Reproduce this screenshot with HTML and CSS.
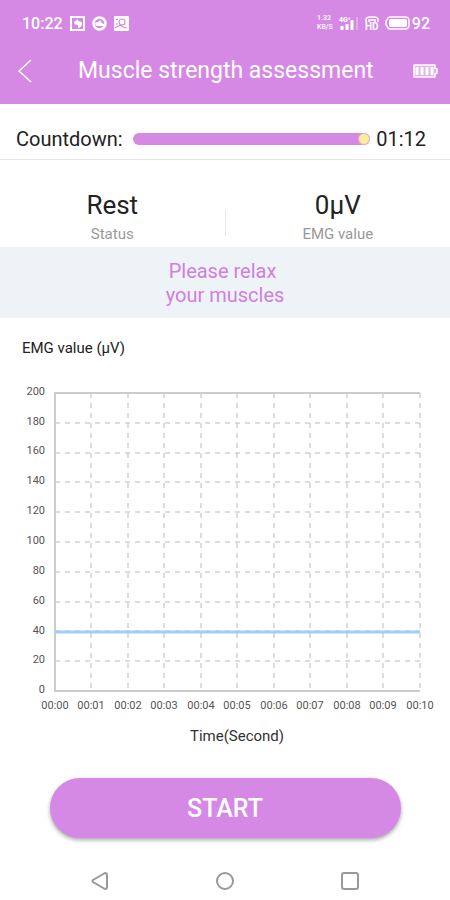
FILE: index.html
```
<!DOCTYPE html>
<html lang='en'>
    <head>
        <meta charset='utf-8'>
        <title>Muscle strength assessment</title>
        <meta name='viewport' content='width=device-width, initial-scale=1.0' />
        <link rel="stylesheet" href="styles.css">
    </head>
    <body>
        <header>
            <div class='statusBar'>
                <span>10:22</span>
                <svg class='statusIcon' width='15' height='15' viewBox='0 0 15 15'>
                    <rect x='1' y='1' width='13' height='13' fill='none' stroke='#fff' stroke-width='2' />
                    <path d='M4 6l4-3v2q4 0 4 3-1 4-4 4V9Q4 9 4 6z' fill='#fff' />
                </svg>
                <svg class='statusIcon' width='15' height='15' viewBox='0 0 15 15'>
                    <circle cx='7.5' cy='7.5' r='6' fill='none' stroke='#fff' stroke-width='2.5' />
                    <path d='M3 7q3 0 5-3 1 3 4 4v2H4z' fill='#fff' />
                </svg>
                <svg class='statusIcon' width='15' height='15' viewBox='0 0 15 15'>
                    <rect width='15' height='15' rx='1' fill='#fff' />
                    <circle cx='8' cy='6' r='3' fill='none' stroke='#d688e5' stroke-width='1.2' />
                    <path d='M2 4l2-1M1 12l5-3 3 2 4 1M2 8h2' fill='none' stroke='#d688e5' stroke-width='1.2' />
                </svg>
                <span class='push speed'><span>1.32</span><span>KB/S</span></span>
                <svg width='19' height='14' viewBox='0 0 19 14'>
                    <text x='0' y='6' class='tiny'>4G⁺</text>
                    <path d='M3 14v-4M8 14V8M13 14V4' stroke='#fff' stroke-width='3' />
                    <path d='M18 14V1' stroke='#fff' stroke-width='2' opacity='0.3' />
                </svg>
                <svg class='hd' width='16' height='16' viewBox='0 0 16 16'>
                    <path d='M2 7V5q0-3 4-3h4q4 0 4 3v2M5 7V5h6v2' fill='none' stroke='#fff' stroke-width='1.5' />
                    <text x='1' y='15' class='hdText'>HD</text>
                </svg>
                <svg width='25' height='14' viewBox='0 0 25 14'>
                    <path d='M5 1h15q4 0 4 4v4q0 4-4 4H5q-2 0-3-3L1 9V5l1-1q1-3 3-3z' fill='none' stroke='#fff' stroke-width='1.5' />
                    <rect x='4' y='3' width='18' height='8' rx='2' fill='#fff' />
                </svg>
                <span class='percent'>92</span>
            </div>
            <div class='titleBar'>
                <button type='button' class='iconButton' aria-label='Back'>
                    <svg width='16' height='26' viewBox='0 0 16 26'>
                        <path d='M13 2L1 13l12 11' fill='none' stroke='#fff' stroke-width='1.5' />
                    </svg>
                </button>
                <h1>Muscle strength assessment</h1>
                <svg class='push' width='25' height='14' viewBox='0 0 25 14'>
                    <path d='M1 1h21v3l2 1v4l-2 1v3H1z' fill='#fff' fill-opacity='0.35' stroke='#fff' stroke-width='1.5' stroke-linejoin='round' />
                    <path d='M4 3v8M9 3v8M14 3v8M19 3v8' stroke='#fff' stroke-width='3' />
                </svg>
            </div>
        </header>
        <div class='countdown'>
            <span id='countdownLabel'>Countdown:</span>
            <div class='bar' role='progressbar' aria-labelledby='countdownLabel' aria-valuenow='100'>
                <span class='knob'></span>
            </div>
            <span>01:12</span>
        </div>
        <div class='readouts'>
            <div class='readout'>
                <div class='value'>Rest</div>
                <div class='name'>Status</div>
            </div>
            <div class='divider'></div>
            <div class='readout'>
                <div class='value'>0µV</div>
                <div class='name'>EMG value</div>
            </div>
        </div>
        <p class='message'>Please relax 
your muscles</p>
        <h2>EMG value (µV)</h2>
        <svg class='chart' viewBox='0 0 450 380'>
            <g class='grid'>
                <path d='M55 53H420M55 83H420M55 112H420M55 142H420M55 172H420M55 202H420M55 232H420M55 261H420M55 291H420' />
                <path d='M91 23V321M128 23V321M164 23V321M201 23V321M237 23V321M274 23V321M310 23V321M347 23V321M383 23V321M420 23V321' />
            </g>
            <path class='frame' d='M420 23H55V321H420' />
            <path class='trace' d='M55 262H420' />
            <g class='yLabels'>
                <text x='45' y='25'>200</text>
                <text x='45' y='55'>180</text>
                <text x='45' y='84'>160</text>
                <text x='45' y='114'>140</text>
                <text x='45' y='144'>120</text>
                <text x='45' y='174'>100</text>
                <text x='45' y='204'>80</text>
                <text x='45' y='234'>60</text>
                <text x='45' y='264'>40</text>
                <text x='45' y='293'>20</text>
                <text x='45' y='323'>0</text>
            </g>
            <g class='xLabels'>
                <text x='55' y='339'>00:00</text>
                <text x='91' y='339'>00:01</text>
                <text x='128' y='339'>00:02</text>
                <text x='164' y='339'>00:03</text>
                <text x='201' y='339'>00:04</text>
                <text x='237' y='339'>00:05</text>
                <text x='274' y='339'>00:06</text>
                <text x='310' y='339'>00:07</text>
                <text x='347' y='339'>00:08</text>
                <text x='383' y='339'>00:09</text>
                <text x='420' y='339'>00:10</text>
            </g>
            <text class='axisTitle' x='237' y='371'>Time(Second)</text>
        </svg>
        <button type='button' class='start'>START</button>
        <nav>
            <button type='button' class='iconButton' aria-label='Back'>
                <svg width='18' height='18' viewBox='0 0 18 18'>
                    <path d='M14 1L2 8q-1 1 0 2l12 7q2 0 2-2V3q0-2-2-2z' />
                </svg>
            </button>
            <button type='button' class='iconButton' aria-label='Home'>
                <svg width='18' height='18' viewBox='0 0 18 18'>
                    <circle cx='9' cy='9' r='8' />
                </svg>
            </button>
            <button type='button' class='iconButton' aria-label='Recent apps'>
                <svg width='18' height='18' viewBox='0 0 18 18'>
                    <rect x='1' y='1' width='16' height='16' rx='2' />
                </svg>
            </button>
        </nav>
    </body>
</html>
```

FILE: styles.css
```
* {
    margin: 0;
    box-sizing: border-box;
}

body {
    background: white;
    color: #222;
    font-family: Roboto, sans-serif;
}

svg {
    display: block;
    flex: none;
}

header {
    background: #d688e5;
    color: white;
    height: 104px;
    padding: 12px 12px 0 18px;
}

.statusBar {
    display: flex;
    align-items: center;
    height: 22px;
    padding: 0 8px 0 4px;
    font-size: 16px;
    font-weight: 500;
}

.statusIcon {
    margin-left: 7px;
}

.push {
    margin-left: auto;
}

.speed {
    display: flex;
    flex-direction: column;
    margin-right: 6px;
    font-size: 7px;
    line-height: 9px;
}

.tiny {
    fill: white;
    font-size: 7px;
    font-weight: 700;
}

.hd {
    margin: 0 5px 0 6px;
}

.hdText {
    fill: white;
    font-size: 10px;
    font-weight: 700;
}

.percent {
    margin-left: 2px;
}

.titleBar {
    display: flex;
    align-items: center;
    margin-top: 20px;
}

h1 {
    font-size: 23px;
    line-height: 34px;
    font-weight: 400;
    padding-left: 44px;
}

.iconButton {
    padding: 0;
    border: none;
    background: none;
    cursor: pointer;
}

.countdown {
    display: flex;
    align-items: center;
    padding: 22px 24px 7px 16px;
    border-bottom: 1px solid #e6e6e6;
    font-size: 20px;
    line-height: 26px;
}

.bar {
    flex: 1;
    display: flex;
    justify-content: flex-end;
    height: 12px;
    margin: 0 6px 0 10px;
    border-radius: 6px;
    background: #d688e5;
}

.knob {
    width: 12px;
    border: 1px solid #e8b0c8;
    border-radius: 50%;
    background: #fbee9a;
}

.readouts {
    display: flex;
    padding-top: 28px;
}

.readout {
    flex: 1;
    text-align: center;
}

.value {
    font-size: 26px;
    line-height: 34px;
}

.name {
    color: #999;
    font-size: 15px;
    line-height: 25px;
}

.divider {
    width: 1px;
    height: 26px;
    margin-top: 22px;
    background: #e6e6e6;
}

.message {
    padding: 12px 0 11px;
    background: #eef3f8;
    color: #d07fe0;
    font-size: 20px;
    line-height: 24px;
    text-align: center;
    white-space: pre;
}

h2 {
    padding: 20px 22px 12px;
    font-size: 15px;
    line-height: 20px;
    font-weight: 400;
}

.chart {
    width: 100%;
}

.grid {
    fill: none;
    stroke: #bbb;
    stroke-dasharray: 5 5;
}

.frame {
    fill: none;
    stroke: #ccc;
    stroke-width: 2;
}

.trace {
    stroke: #9bd0fa;
    stroke-width: 3;
}

.yLabels,
.xLabels {
    fill: #555;
    font-size: 11px;
    text-anchor: end;
}

.xLabels {
    text-anchor: middle;
}

.axisTitle {
    fill: #333;
    font-size: 15px;
    text-anchor: middle;
}

.start {
    display: block;
    width: 78%;
    height: 60px;
    margin: 28px auto 0;
    border: none;
    border-radius: 30px;
    background: #d688e5;
    box-shadow: 0 2px 4px rgba(0, 0, 0, 0.35);
    color: white;
    font-family: inherit;
    font-size: 25px;
    font-weight: 500;
    cursor: pointer;
}

nav {
    display: grid;
    grid-template-columns: repeat(3, 1fr);
    justify-items: center;
    padding: 34px 38px 10px;
}

nav svg {
    fill: none;
    stroke: #999;
    stroke-width: 2;
}
```
